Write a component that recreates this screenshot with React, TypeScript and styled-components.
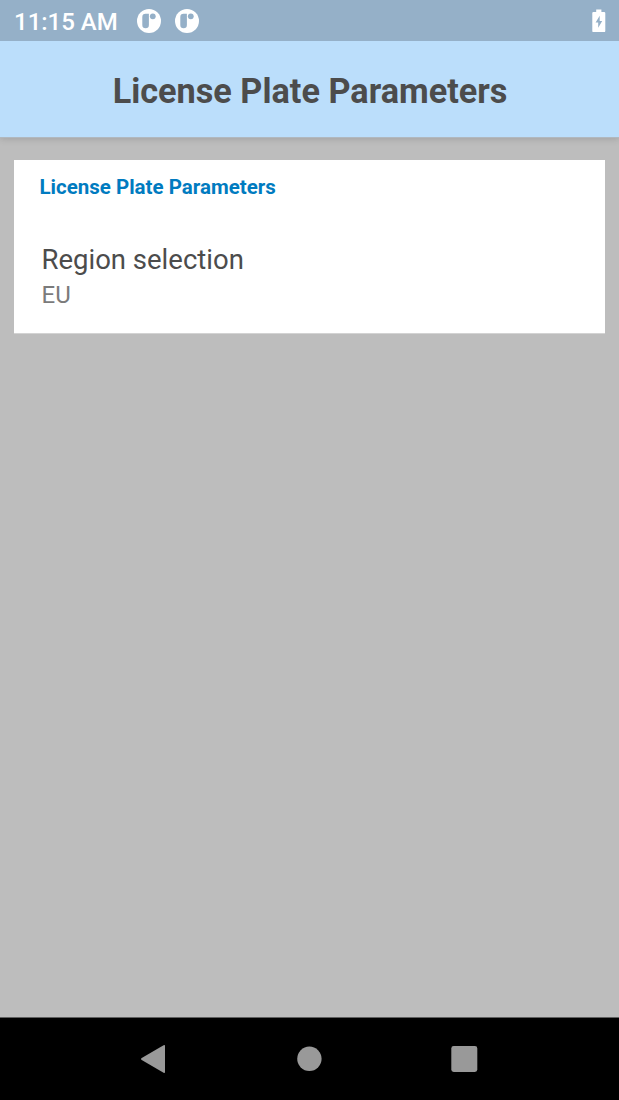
import React from "react";
import styled, { createGlobalStyle } from "styled-components";

const GlobalStyle = createGlobalStyle`
  * { box-sizing: border-box; }
  body { margin: 0; background: #bdbdbd; font-family: Roboto, sans-serif; }
`;

const Screen = styled.div`
  width: 619px;
  height: 1100px;
  display: flex;
  flex-direction: column;
  overflow: hidden;
  background: #bdbdbd;
`;

const StatusBar = styled.div`
  height: 41px;
  flex: none;
  display: flex;
  align-items: center;
  padding: 0 13px 0 14px;
  position: relative;
  z-index: 1;
  background: #95b0c8;
  color: #fff;
`;

const Clock = styled.span`
  width: 123px;
  padding-top: 3px;
  font-size: 24px;
  line-height: 28px;
  font-weight: 500;
  white-space: nowrap;
`;

const Notifications = styled.div`
  flex: 1;
  display: flex;
  gap: 14px;
  svg { display: block; }
`;

const AppBar = styled.header`
  height: 96px;
  flex: none;
  display: flex;
  align-items: center;
  justify-content: center;
  padding: 3px 0 0 1px;
  background: #bbdefb;
  box-shadow: 0 1px 0 #b0b8bf, 0 2px 7px rgba(0, 0, 0, 0.15);
`;

const Title = styled.h1`
  margin: 0;
  color: #4c4c4c;
  font-size: 34.25px;
  line-height: 40px;
  font-weight: 700;
  white-space: nowrap;
`;

const Content = styled.main`
  flex: 1;
  padding: 23px 14px 0;
`;

const Card = styled.section`
  height: 173px;
  padding: 15px 25.5px 0;
  background: #fff;
  box-shadow: 0 1px 0 #d3d3d3;
`;

const Category = styled.h2`
  margin: 0 0 45px;
  color: #007bc0;
  font-size: 20.5px;
  line-height: 24px;
  font-weight: 700;
`;

const Preference = styled.div`
  display: flex;
  flex-direction: column;
  padding-left: 2px;
`;

const Label = styled.span`
  color: #4c4c4c;
  font-size: 27.5px;
  line-height: 32px;
  margin-bottom: 5px;
`;

const Value = styled.span`
  color: #7b7b7b;
  font-size: 24px;
  line-height: 28px;
`;

const NavBar = styled.nav`
  height: 83px;
  flex: none;
  display: flex;
  justify-content: center;
  align-items: center;
  border-top: 1px solid #5f5f5f;
  background: #000;
`;

const NavButton = styled.button`
  width: 155px;
  height: 82px;
  padding: 0;
  border: 0;
  background: none;
  display: flex;
  align-items: center;
  justify-content: center;
  svg { display: block; fill: #999; }
`;

const NotificationIcon = () => (
  <svg width="24" height="24" viewBox="0 0 24 24">
    <circle cx="12" cy="12" r="12" fill="#fff" />
    <path
      d="M8.5 4.7H11.9V16a3.3 3.3 0 0 1-6.6 0V7.9a3.2 3.2 0 0 1 3.2-3.2z"
      fill="#95b0c8"
    />
    <circle cx="15.8" cy="7.3" r="2.9" fill="#95b0c8" />
  </svg>
);

const BatteryIcon = () => (
  <svg width="14" height="24" viewBox="0 0 14 24">
    <path
      fill="#fff"
      fillRule="evenodd"
      d="M4.2 .6h5.2v2.3h2.7q1.2 0 1.2 1.2v17.8q0 1.2-1.2 1.2H1.5q-1.2 0-1.2-1.2V4.1q0-1.2 1.2-1.2h2.7zM7.7 6.7 3.6 13.5h2.6v5.2L10.2 11.9H7.7z"
    />
  </svg>
);

export default function App() {
  return (
    <>
      <GlobalStyle />
      <Screen>
        <StatusBar>
          <Clock>11:15 AM</Clock>
          <Notifications>
            <NotificationIcon />
            <NotificationIcon />
          </Notifications>
          <BatteryIcon />
        </StatusBar>
        <AppBar>
          <Title>License Plate Parameters</Title>
        </AppBar>
        <Content>
          <Card>
            <Category>License Plate Parameters</Category>
            <Preference>
              <Label>Region selection</Label>
              <Value>EU</Value>
            </Preference>
          </Card>
        </Content>
        <NavBar>
          <NavButton aria-label="Back">
            <svg width="28" height="28" viewBox="2 0 28 28">
              <path d="M24.6 0.3q1.4-.8 1.4.8v25.8q0 1.6-1.4.8L2.7 14.9q-1.4-.9 0-1.8z" />
            </svg>
          </NavButton>
          <NavButton aria-label="Home">
            <svg width="26" height="26" viewBox="0 0 26 26">
              <circle cx="12.4" cy="12.8" r="12.2" />
            </svg>
          </NavButton>
          <NavButton aria-label="Recents">
            <svg width="28" height="26" viewBox="0 0 28 26">
              <rect x="0.3" width="26" height="26" rx="2.4" />
            </svg>
          </NavButton>
        </NavBar>
      </Screen>
    </>
  );
}
